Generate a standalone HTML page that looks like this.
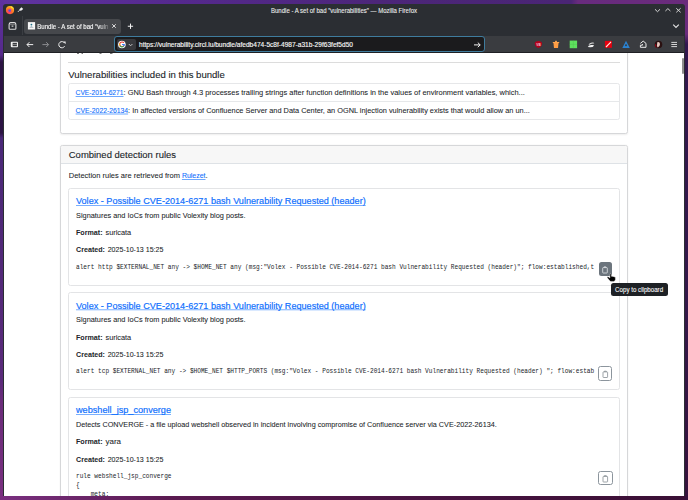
<!DOCTYPE html>
<html><head><meta charset="utf-8"><title>Bundle - A set of bad "vulnerabilities"</title>
<style>
html,body{margin:0;padding:0;width:688px;height:500px;overflow:hidden;font-family:"Liberation Sans",sans-serif}
body{position:relative;background:linear-gradient(90deg,#6034a2 0%,#55298e 25%,#4c2679 55%,#4a2575 83%,#682b7e 84%,#6a2b7c 100%)}
.abs{position:absolute;box-sizing:border-box}
#desk-l{left:0;top:0;width:4px;height:500px;background:linear-gradient(180deg,#5e33a0 0px,#55298a 55px,#2c1444 62px,#2c1444 133px,#4a2878 138px,#5a2a7a 380px,#6a2c7a 400px,#7a3080 500px)}
#desk-b{left:0;top:496px;width:688px;height:4px;background:linear-gradient(90deg,#7a3080 0%,#5a1a50 25%,#4a1442 60%,#3a1035 100%)}
#desk-r{left:685px;top:0;width:3px;height:500px;background:linear-gradient(180deg,#6a2b7c 0px,#6a2b7c 34px,#32184e 44px,#34184a 300px,#36123c 500px)}
#win{left:3px;top:4px;width:682px;height:492px;background:#2b2e33;border-radius:3px 3px 0 0;overflow:hidden}
#nav{left:4px;top:36px;width:680px;height:16px;background:#3a3c40}
#navline{left:4px;top:52px;width:680px;height:1px;background:#1f2024}
#content{left:4px;top:53px;width:680px;height:443px;background:#fff}
#tab{left:24px;top:18.5px;width:97px;height:15px;background:#46484c;border-radius:3px}
#tabsep{left:22px;top:16px;width:1px;height:19px;background:#3a3d42}
#url{left:114px;top:36.3px;width:371px;height:16px;border:1.3px solid #3f7c9e;border-radius:3px;background:#1b1b1d}
#gbtn{left:116.5px;top:39px;width:19px;height:11px;background:#38393d;border-radius:2px}
.card{border:1px solid #d6d7d9;border-radius:2.5px;background:#fff;box-shadow:0 0.5px 2px rgba(0,0,0,.07)}
#card1{left:60px;top:20px;width:568px;height:114px}
#hr{left:68px;top:62px;width:552px;height:1px;background:#dcdcdc}
#lg{left:68px;top:83px;width:552px;height:37px;border:1px solid #e6e7e9;border-radius:2.5px}
#lgdiv{left:69px;top:101px;width:550px;height:1px;background:#e6e8ea}
#card2{left:60px;top:145px;width:568px;height:400px}
#card2h{left:61px;top:146px;width:566px;height:18px;background:#f7f7f7;border-bottom:1px solid #dee2e6;border-radius:2px 2px 0 0}
#rA{left:68px;top:188px;width:552px;height:98px}
#rB{left:68px;top:292px;width:552px;height:98px}
#rC{left:68px;top:397px;width:552px;height:200px}
.btn{border-radius:2.5px}
#btnA{left:598.5px;top:262.2px;width:13.5px;height:13.5px;background:#6c757d}
#btnB{left:598.3px;top:366.4px;width:14.2px;height:14.2px;border:1px solid #8c959d}
#btnC{left:598.3px;top:470.8px;width:14.5px;height:14px;border:1px solid #8c959d}
#tip{left:611px;top:282.8px;width:56.6px;height:12.8px;background:#1e2125;border-radius:2.5px}
#thumb{left:682px;top:58px;width:2px;height:16px;background:#8f8f8f;border-radius:1px}
svg{position:absolute;left:0;top:0}
#rA,#rB,#rC{border-color:#e3e4e6;box-shadow:none}
</style></head><body>
<div id="desk-l" class="abs"></div><div id="desk-b" class="abs"></div><div id="desk-r" class="abs"></div>
<div id="win" class="abs"></div>
<div id="tabsep" class="abs"></div>
<div id="tab" class="abs"></div>
<div id="nav" class="abs"></div>
<div id="navline" class="abs"></div>
<div id="content" class="abs"></div>
<div id="url" class="abs"></div>
<div id="gbtn" class="abs"></div>
<div id="cwrap" class="abs" style="left:0;top:0;width:688px;height:500px;clip-path:inset(53px 4px 4px 4px)">
<div id="card1" class="abs card"></div>
<div id="hr" class="abs"></div>
<div id="lg" class="abs"></div>
<div id="lgdiv" class="abs"></div>
<div id="card2" class="abs card"></div>
<div id="card2h" class="abs"></div>
<div id="rA" class="abs card"></div>
<div id="rB" class="abs card"></div>
<div id="rC" class="abs card"></div>
<div id="btnA" class="abs btn"></div>
<div id="btnB" class="abs btn"></div>
<div id="btnC" class="abs btn"></div>
<div id="tip" class="abs"></div>
</div>
<div id="thumb" class="abs"></div>
<svg style="white-space:pre" width="688" height="500" viewBox="0 0 688 500">
<defs>
<clipPath id="codeclip"><rect x="70" y="250" width="525" height="250"/></clipPath>
<linearGradient id="fadeg" x1="0" x2="1"><stop offset="0" stop-color="#fff"/><stop offset="0.85" stop-color="#fff"/><stop offset="1" stop-color="#000"/></linearGradient>
<mask id="tabfade" maskUnits="userSpaceOnUse" x="0" y="0" width="688" height="60"><rect x="30" y="18" width="81" height="16" fill="url(#fadeg)"/></mask>
</defs>
<g id="chrome-icons">
<!-- firefox logo -->
<defs>
<radialGradient id="ffg" cx="0.35" cy="0.8" r="0.9"><stop offset="0" stop-color="#ff3a6a"/><stop offset="0.45" stop-color="#ff6a2a"/><stop offset="0.8" stop-color="#ffb020"/><stop offset="1" stop-color="#ffe020"/></radialGradient>
</defs>
<circle cx="10" cy="10.1" r="4.1" fill="url(#ffg)"/>
<path d="M10.8 6 Q13.6 7 14 9.6 Q12.8 7.8 11 8 Z" fill="#ffd83a"/>
<circle cx="9.7" cy="10.5" r="1.3" fill="#5b4be8"/>
<path d="M9.4 9.1 Q10.8 8.6 11.2 10 Q10.4 9.6 9.6 9.9Z" fill="#b23be0"/>
<!-- pin -->
<path d="M17.8 12 L19.9 9.9" stroke="#f0f0f0" stroke-width="0.8"/>
<path d="M19.2 9.6 L21.4 7.2 L23.2 8.9 L20.8 11.1 Z" fill="#f0f0f0"/>
<!-- firefox view icon -->
<path d="M9.4 23.8 Q9.4 22.6 10.6 22.6 L14.4 22.6 Q15.6 22.6 15.6 23.8 L15.9 24.6 L15.9 28.4 Q15.9 29.3 15 29.3 L10 29.3 Q9.1 29.3 9.1 28.4 L9.1 24.6 Z" fill="none" stroke="#dcdcdc" stroke-width="1.1"/>
<rect x="9.6" y="24.4" width="5.8" height="0.7" fill="#9a9a9a"/>
<rect x="11.6" y="25.6" width="1.8" height="1.1" fill="#e0e0e0"/>
<!-- favicon -->
<rect x="27.9" y="22.1" width="7.2" height="7.4" fill="#f6f6f6"/>
<circle cx="31.4" cy="24.6" r="0.9" fill="#1d6f8a"/>
<path d="M30 26.6 Q31.4 25.2 32.8 26.6 Z" fill="#2a7f8f"/>
<rect x="29.6" y="27.1" width="3.8" height="0.9" fill="#b9b9c2"/>
<!-- tab close -->
<path d="M112.2 24.2 L115.8 27.8 M115.8 24.2 L112.2 27.8" stroke="#e8e8e8" stroke-width="0.9"/>
<!-- new tab + -->
<path d="M130.5 23.6 V28.9 M127.8 26.25 H133.1" stroke="#f2f2f2" stroke-width="1"/>
<!-- window controls -->
<path d="M655 9.3 L657.5 11.7 L660 9.3" fill="none" stroke="#d8d8d8" stroke-width="1"/>
<path d="M665.4 11 L667.9 8.6 L670.4 11" fill="none" stroke="#d8d8d8" stroke-width="1"/>
<path d="M676.3 8.3 L680.6 12.3 M680.6 8.3 L676.3 12.3" fill="none" stroke="#d8d8d8" stroke-width="1"/>
<!-- tab list chevron -->
<path d="M673.2 24.6 L676 27.4 L678.8 24.6" fill="none" stroke="#e6e6e6" stroke-width="1.1"/>
<!-- sidebar -->
<rect x="10.8" y="41.7" width="7.2" height="5.6" rx="1" fill="#f2f2f2"/>
<rect x="12.6" y="42.8" width="4.3" height="3.4" fill="#3a3c40"/>
<rect x="12.6" y="44.3" width="4.3" height="0.5" fill="#d0d0d0"/>
<!-- back -->
<path d="M27 44.6 H33.2 M29.4 42.2 L27 44.6 L29.4 47" fill="none" stroke="#f0f0f0" stroke-width="1"/>
<!-- forward -->
<path d="M42.4 44.6 H48.6 M46.2 42.2 L48.6 44.6 L46.2 47" fill="none" stroke="#8c8d90" stroke-width="1"/>
<!-- reload -->
<path d="M64.6 43.2 A3.1 3.1 0 1 0 64.6 46.2" fill="none" stroke="#f0f0f0" stroke-width="1"/>
<path d="M63.2 41.6 L65.6 41.6 L65.6 44 Z" fill="#f0f0f0"/>
<!-- google button chevron -->
<path d="M128.8 44 L130.6 45.8 L132.4 44" fill="none" stroke="#d0d0d0" stroke-width="0.9"/>
<!-- google G -->
<circle cx="121.9" cy="44.5" r="3.8" fill="#fff"/>
<path d="M123.9 42.9 A2.3 2.3 0 1 0 124.2 45" fill="none" stroke="#ea4335" stroke-width="1.1"/>
<path d="M119.7 43.7 A2.3 2.3 0 0 0 119.7 45.3" fill="none" stroke="#fbbc05" stroke-width="1.1"/>
<path d="M119.9 45.8 A2.3 2.3 0 0 0 123.6 46.2" fill="none" stroke="#34a853" stroke-width="1.1"/>
<path d="M122 44.5 H124.3 A2.3 2.3 0 0 1 123.6 46.2" fill="none" stroke="#4285f4" stroke-width="1.1"/>
<!-- go arrow -->
<path d="M474 44.9 H480.2 M477.8 42.6 L480.2 44.9 L477.8 47.2" fill="none" stroke="#f0f0f0" stroke-width="1"/>
<!-- extension icons -->
<path d="M538.4 41.1 Q541.8 41.3 542 43.2 Q542 46.6 538.4 48 Q534.8 46.6 534.8 43.2 Q535 41.3 538.4 41.1Z" fill="#b3001b"/>
<text x="536.3" y="45.9" font-size="3.2" font-family="Liberation Sans" font-weight="700" fill="#f4d0d8">VB</text>
<path d="M553.4 42.6 H558.6 L558 48.1 H554 Z" fill="#ff9d45"/>
<rect x="552.8" y="42" width="6.4" height="1" fill="#ffa54d"/>
<rect x="555.1" y="40.8" width="1.8" height="1.3" fill="#ffa54d"/>
<rect x="569.7" y="40.6" width="7.4" height="7.6" fill="#5fe05f"/>
<path d="M573.4 40.6 V48.2 M569.7 44.4 H577.1" stroke="#4cc84c" stroke-width="0.4"/>
<path d="M588.4 45.2 Q589.2 42.6 592 42.6 Q594.6 42.4 594.2 43.6 Q592.2 43.2 590.4 44.2 Z" fill="#d8d8d8"/>
<path d="M587.8 47 Q588.6 45 591.4 45 Q594.4 44.8 594.2 45.4 Q593 47.3 590.2 47.3 Z" fill="#f2f2f2"/>
<rect x="604.9" y="40.9" width="7" height="6.9" fill="#e5000f"/>
<path d="M606 47 L611 41.8" stroke="#ffe8e0" stroke-width="1.1"/>
<path d="M626 40.7 L629.8 48 H622.3 Z" fill="#2a82d0"/>
<circle cx="626" cy="45.3" r="1" fill="#3b3d41"/>
<path d="M640.4 43.4 L643.2 41.1 L646 43.4 V47.3 H640.4 V45.2 L642.4 45.2 L642.4 44" fill="none" stroke="#eaeaea" stroke-width="1"/>
<circle cx="658.5" cy="44.5" r="3.8" fill="#2a1010"/>
<path d="M657.3 42.2 Q659.8 41.6 660 44 Q659.8 47.2 657.7 47.6 Q656.4 46 657.3 42.2Z" fill="#e8c8c0"/>
<path d="M656 44 Q655.6 47 657.6 48 Q655 47.8 655.2 44.6Z" fill="#b00018"/>
<path d="M671.3 42.4 H677 M671.3 44.5 H677 M671.3 46.6 H677" stroke="#e6e6e6" stroke-width="0.9"/>
</g>


<g>
<text x="68.3" y="77.7" font-size="9.9" font-family="Liberation Sans" font-weight="400" fill="#212529" textLength="156.5" lengthAdjust="spacingAndGlyphs" stroke="#212529" stroke-width="0.12">Vulnerabilities included in this bundle</text>
<text x="75.6" y="95.3" font-size="8.1" font-family="Liberation Sans" font-weight="400" fill="#0d6efd" textLength="47.9" lengthAdjust="spacingAndGlyphs"  stroke="#0d6efd" stroke-width="0.1">CVE-2014-6271</text>
<text x="123.5" y="95.3" font-size="8.1" font-family="Liberation Sans" font-weight="400" fill="#212529" textLength="401.29999999999995" lengthAdjust="spacingAndGlyphs"  stroke="#212529" stroke-width="0.07">: GNU Bash through 4.3 processes trailing strings after function definitions in the values of environment variables, which...</text>
<text x="75.6" y="113" font-size="8.1" font-family="Liberation Sans" font-weight="400" fill="#0d6efd" textLength="52.5" lengthAdjust="spacingAndGlyphs"  stroke="#0d6efd" stroke-width="0.1">CVE-2022-26134</text>
<text x="128.1" y="113" font-size="8.1" font-family="Liberation Sans" font-weight="400" fill="#212529" textLength="401.69999999999993" lengthAdjust="spacingAndGlyphs"  stroke="#212529" stroke-width="0.07">: In affected versions of Confluence Server and Data Center, an OGNL injection vulnerability exists that would allow an un...</text>
<text x="68.8" y="157.5" font-size="9.7" font-family="Liberation Sans" font-weight="400" fill="#212529" textLength="107.2" lengthAdjust="spacingAndGlyphs" stroke="#212529" stroke-width="0.12">Combined detection rules</text>
<text x="68.8" y="178.3" font-size="8.1" font-family="Liberation Sans" font-weight="400" fill="#212529" textLength="111.10000000000001" lengthAdjust="spacingAndGlyphs"  stroke="#212529" stroke-width="0.07">Detection rules are retrieved from</text>
<text x="181.9" y="178.3" font-size="8.1" font-family="Liberation Sans" font-weight="400" fill="#0d6efd" textLength="23.6" lengthAdjust="spacingAndGlyphs"  stroke="#0d6efd" stroke-width="0.1">Rulezet</text>
<text x="205.5" y="178.3" font-size="8.1" font-family="Liberation Sans" font-weight="400" fill="#212529" >.</text>
<text x="76" y="204.2" font-size="9.5" font-family="Liberation Sans" font-weight="400" fill="#0d6efd" textLength="289.7" lengthAdjust="spacingAndGlyphs" stroke="#0d6efd" stroke-width="0.18">Volex - Possible CVE-2014-6271 bash Vulnerability Requested (header)</text>
<text x="76" y="217.79999999999998" font-size="8.1" font-family="Liberation Sans" font-weight="400" fill="#212529" textLength="169.6" lengthAdjust="spacingAndGlyphs"  stroke="#212529" stroke-width="0.07">Signatures and IoCs from public Volexity blog posts.</text>
<text x="76" y="235.0" font-size="8.1" font-family="Liberation Sans" font-weight="700" fill="#212529" textLength="26.6" lengthAdjust="spacingAndGlyphs" >Format:</text>
<text x="105.5" y="235.0" font-size="8.1" font-family="Liberation Sans" font-weight="400" fill="#212529" textLength="25.69999999999999" lengthAdjust="spacingAndGlyphs"  stroke="#212529" stroke-width="0.07">suricata</text>
<text x="76" y="252.39999999999998" font-size="8.1" font-family="Liberation Sans" font-weight="700" fill="#212529" textLength="29.0" lengthAdjust="spacingAndGlyphs" >Created:</text>
<text x="107.7" y="252.39999999999998" font-size="8.1" font-family="Liberation Sans" font-weight="400" fill="#212529" textLength="55.7" lengthAdjust="spacingAndGlyphs"  stroke="#212529" stroke-width="0.07">2025-10-13 15:25</text>
<text x="76" y="268.6" font-size="6.5" font-family="Liberation Mono" font-weight="400" fill="#212529" textLength="518.17" lengthAdjust="spacingAndGlyphs" xml:space="preserve" clip-path="url(#codeclip)">alert http $EXTERNAL_NET any -&gt; $HOME_NET any (msg:&quot;Volex - Possible CVE-2014-6271 bash Vulnerability Requested (header)&quot;; flow:established,t</text>
<text x="76" y="308.8" font-size="9.5" font-family="Liberation Sans" font-weight="400" fill="#0d6efd" textLength="289.7" lengthAdjust="spacingAndGlyphs" stroke="#0d6efd" stroke-width="0.18">Volex - Possible CVE-2014-6271 bash Vulnerability Requested (header)</text>
<text x="76" y="322.40000000000003" font-size="8.1" font-family="Liberation Sans" font-weight="400" fill="#212529" textLength="169.6" lengthAdjust="spacingAndGlyphs"  stroke="#212529" stroke-width="0.07">Signatures and IoCs from public Volexity blog posts.</text>
<text x="76" y="339.6" font-size="8.1" font-family="Liberation Sans" font-weight="700" fill="#212529" textLength="26.6" lengthAdjust="spacingAndGlyphs" >Format:</text>
<text x="105.5" y="339.6" font-size="8.1" font-family="Liberation Sans" font-weight="400" fill="#212529" textLength="25.69999999999999" lengthAdjust="spacingAndGlyphs"  stroke="#212529" stroke-width="0.07">suricata</text>
<text x="76" y="357.0" font-size="8.1" font-family="Liberation Sans" font-weight="700" fill="#212529" textLength="29.0" lengthAdjust="spacingAndGlyphs" >Created:</text>
<text x="107.7" y="357.0" font-size="8.1" font-family="Liberation Sans" font-weight="400" fill="#212529" textLength="55.7" lengthAdjust="spacingAndGlyphs"  stroke="#212529" stroke-width="0.07">2025-10-13 15:25</text>
<text x="76" y="373.20000000000005" font-size="6.5" font-family="Liberation Mono" font-weight="400" fill="#212529" textLength="518.17" lengthAdjust="spacingAndGlyphs" xml:space="preserve" clip-path="url(#codeclip)">alert tcp $EXTERNAL_NET any -&gt; $HOME_NET $HTTP_PORTS (msg:&quot;Volex - Possible CVE-2014-6271 bash Vulnerability Requested (header) &quot;; flow:estab</text>
<text x="76" y="413.4" font-size="9.5" font-family="Liberation Sans" font-weight="400" fill="#0d6efd" textLength="95" lengthAdjust="spacingAndGlyphs" stroke="#0d6efd" stroke-width="0.18">webshell_jsp_converge</text>
<text x="76" y="427.0" font-size="8.1" font-family="Liberation Sans" font-weight="400" fill="#212529" textLength="420.7" lengthAdjust="spacingAndGlyphs"  stroke="#212529" stroke-width="0.07">Detects CONVERGE - a file upload webshell observed in incident involving compromise of Confluence server via CVE-2022-26134.</text>
<text x="76" y="444.2" font-size="8.1" font-family="Liberation Sans" font-weight="700" fill="#212529" textLength="26.6" lengthAdjust="spacingAndGlyphs" >Format:</text>
<text x="105.5" y="444.2" font-size="8.1" font-family="Liberation Sans" font-weight="400" fill="#212529" textLength="15.5" lengthAdjust="spacingAndGlyphs"  stroke="#212529" stroke-width="0.07">yara</text>
<text x="76" y="461.59999999999997" font-size="8.1" font-family="Liberation Sans" font-weight="700" fill="#212529" textLength="29.0" lengthAdjust="spacingAndGlyphs" >Created:</text>
<text x="107.7" y="461.59999999999997" font-size="8.1" font-family="Liberation Sans" font-weight="400" fill="#212529" textLength="55.7" lengthAdjust="spacingAndGlyphs"  stroke="#212529" stroke-width="0.07">2025-10-13 15:25</text>
<text x="76" y="477.79999999999995" font-size="6.5" font-family="Liberation Mono" font-weight="400" fill="#212529" textLength="95.55" lengthAdjust="spacingAndGlyphs" xml:space="preserve" clip-path="url(#codeclip)">rule webshell_jsp_converge</text>
<text x="76" y="487.09999999999997" font-size="6.5" font-family="Liberation Mono" font-weight="400" fill="#212529" textLength="3.67" lengthAdjust="spacingAndGlyphs" xml:space="preserve" >{</text>
<text x="76" y="496.4" font-size="6.5" font-family="Liberation Mono" font-weight="400" fill="#212529" textLength="33.07" lengthAdjust="spacingAndGlyphs" xml:space="preserve" >    meta:</text>
<text x="271" y="12.6" font-size="6.5" font-family="Liberation Sans" font-weight="400" fill="#eeeeee" textLength="146" lengthAdjust="spacingAndGlyphs"  stroke="#eeeeee" stroke-width="0.08">Bundle - A set of bad &quot;vulnerabilities&quot; — Mozilla Firefox</text>
<text x="37.2" y="29.0" font-size="7.0" font-family="Liberation Sans" font-weight="400" fill="#f4f4f4" textLength="71.3" lengthAdjust="spacingAndGlyphs" mask="url(#tabfade)" stroke="#f4f4f4" stroke-width="0.15">Bundle - A set of bad &quot;vuln</text>
<text x="139" y="46.9" font-size="6.8" font-family="Liberation Sans" font-weight="400" fill="#f6f6f6" textLength="214" lengthAdjust="spacingAndGlyphs"  stroke="#f6f6f6" stroke-width="0.15">https://vulnerability.circl.lu/bundle/afedb474-5c8f-4987-a31b-29f63fef5d50</text>
<text x="615.1" y="291.8" font-size="6.7" font-family="Liberation Sans" font-weight="400" fill="#ffffff" textLength="48" lengthAdjust="spacingAndGlyphs"  stroke="#ffffff" stroke-width="0.08">Copy to clipboard</text>
</g>
<!-- clipboard icons -->
<path d="M603.3 267.6 H606.7 Q607.3 267.6 607.3 268.2 V272.4 Q607.3 273 606.7 273 H603.3 Q602.7 273 602.7 272.4 V268.2 Q602.7 267.6 603.3 267.6 Z M604 267.6 V266.9 H606 V267.6" fill="none" stroke="#e9ecef" stroke-width="0.75"/>
<path d="M603.6 371.9 H607 Q607.6 371.9 607.6 372.5 V376.9 Q607.6 377.5 607 377.5 H603.6 Q603 377.5 603 376.9 V372.5 Q603 371.9 603.6 371.9 Z M604.3 371.9 V371.2 H606.3 V371.9" fill="none" stroke="#7d858c" stroke-width="0.75"/>
<path d="M603.6 476.4 H607 Q607.6 476.4 607.6 477 V481.4 Q607.6 482 607 482 H603.6 Q603 482 603 481.4 V477 Q603 476.4 603.6 476.4 Z M604.3 476.4 V475.7 H606.3 V476.4" fill="none" stroke="#7d858c" stroke-width="0.75"/>
<!-- hand cursor -->
<path d="M609.9 274.4 Q610.6 273.3 611.4 274.4 V276.3 Q612.2 275.9 612.8 276.5 Q613.6 276.2 614.1 276.9 Q615.1 276.7 615.4 277.6 V279.6 Q615.3 281.2 613.8 281.4 H610.8 Q610.1 281.3 609.6 280.6 L607.3 277.8 Q606.9 277 607.7 276.8 Q608.4 276.7 609 277.3 L609.9 278 Z" fill="#000" stroke="#fff" stroke-width="0.4"/>
<!-- descender marks from text above -->
<g fill="#7a7a7a"><rect x="77" y="53" width="2" height="1"/><rect x="81.5" y="53" width="1.5" height="1"/><rect x="99.5" y="53" width="2" height="1"/><rect x="110" y="53" width="2.5" height="1"/></g>
<!-- underlines -->
<g fill="#0d6efd">
<rect x="75.6" y="96.4" width="47.9" height="0.6"/>
<rect x="75.6" y="113.7" width="52.5" height="0.6"/>
<rect x="181.9" y="179" width="23.6" height="0.6"/>
<rect x="76" y="205" width="289.7" height="0.55"/>
<rect x="76" y="309.6" width="289.7" height="0.55"/>
<rect x="76" y="414.2" width="95" height="0.55"/>
</g>
</svg>
</body></html>
